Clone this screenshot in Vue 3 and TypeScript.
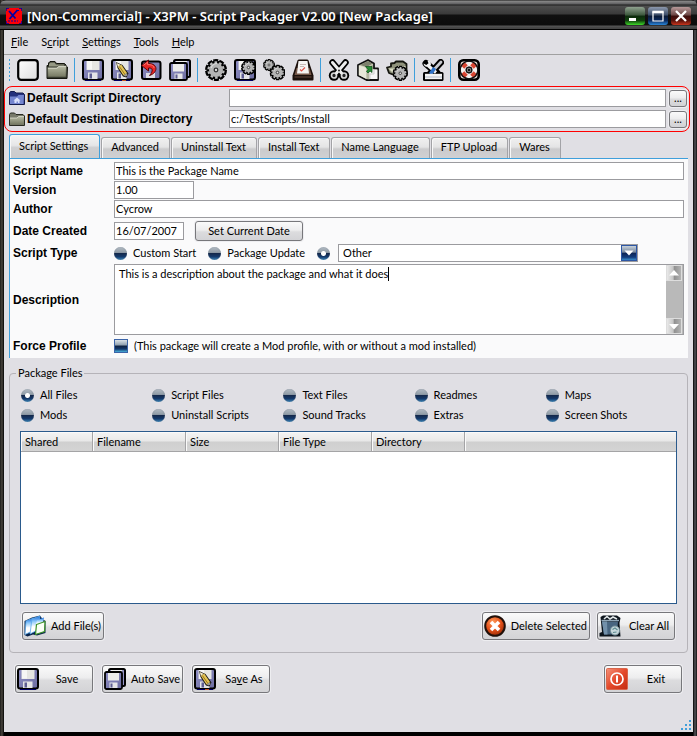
<script setup lang="ts">
import { nextTick, onMounted, ref, watch } from 'vue'

interface MenuEntry { before: string; key: string; after: string }
interface DirectoryRow { id: string; label: string; icon: string }

const menus: MenuEntry[] = [
  { before: '', key: 'F', after: 'ile' },
  { before: 'S', key: 'c', after: 'ript' },
  { before: '', key: 'S', after: 'ettings' },
  { before: '', key: 'T', after: 'ools' },
  { before: '', key: 'H', after: 'elp' },
]

const toolGroups: string[][] = [
  ['new', 'open'],
  ['save', 'save-as', 'revert', 'save-all'],
  ['gear', 'save-gear', 'gears', 'print'],
  ['cut', 'package', 'folder-gear'],
  ['tools'],
  ['help'],
]

const directories: DirectoryRow[] = [
  { id: 'script-dir', label: 'Default Script Directory', icon: 'home-folder' },
  { id: 'dest-dir', label: 'Default Destination Directory', icon: 'folder' },
]
const paths = ref<string[]>(['', 'c:/TestScripts/Install'])

const tabs: string[] = ['Script Settings', 'Advanced', 'Uninstall Text', 'Install Text', 'Name Language', 'FTP Upload', 'Wares']
const activeTab = ref('Script Settings')

const scriptName = ref('This is the Package Name')
const version = ref('1.00')
const author = ref('Cycrow')
const created = ref('16/07/2007')
const scriptType = ref('other')
const otherType = ref('Other')
const description = ref('This is a description about the package and what it does')
const forceProfile = ref(false)

const fileFilters: string[] = [
  'All Files', 'Script Files', 'Text Files', 'Readmes', 'Maps',
  'Mods', 'Uninstall Scripts', 'Sound Tracks', 'Extras', 'Screen Shots',
]
const fileFilter = ref('All Files')
const columns: string[] = ['Shared', 'Filename', 'Size', 'File Type', 'Directory', '']

const descriptionBox = ref<HTMLTextAreaElement | null>(null)
const caretOffset = ref(0)
const caretLine = ref(0)

function setCurrentDate(): void {
  created.value = new Date().toLocaleDateString('en-GB')
}

function scrollDescription(step: number): void {
  descriptionBox.value?.scrollBy({ top: step })
}

// Steady, non-blinking caret placed after the typed text.
function placeCaret(): void {
  const box = descriptionBox.value
  const context = document.createElement('canvas').getContext('2d')
  if (!box || !context) return
  const style = getComputedStyle(box)
  context.font = `${style.fontSize} ${style.fontFamily}`
  const lines = box.value.slice(0, box.selectionEnd).split('\n')
  caretLine.value = lines.length - 1
  caretOffset.value = Math.round(context.measureText(lines[lines.length - 1]).width)
}

onMounted(async () => {
  await nextTick()
  const box = descriptionBox.value
  if (box) {
    box.focus()
    box.setSelectionRange(box.value.length, box.value.length)
  }
  placeCaret()
})

watch(description, placeCaret, { flush: 'post' })
</script>

<template>
  <svg class="sprite" width="0" height="0" aria-hidden="true">
    <defs>
      <linearGradient id="paper" x1="0" y1="0" x2="1" y2="1">
        <stop offset="0" stop-color="#fff" /><stop offset="1" stop-color="#dcdcdc" />
      </linearGradient>
      <linearGradient id="olive" x1="0" y1="0" x2="0" y2="1">
        <stop offset="0" stop-color="#b9bca6" /><stop offset="1" stop-color="#747761" />
      </linearGradient>
      <linearGradient id="disk" x1="0" y1="0" x2="1" y2="1">
        <stop offset="0" stop-color="#8f8fc4" /><stop offset="1" stop-color="#6c6ca0" />
      </linearGradient>
      <radialGradient id="orange" cx=".4" cy=".3" r=".8">
        <stop offset="0" stop-color="#ff9a5a" /><stop offset=".5" stop-color="#e4511a" /><stop offset="1" stop-color="#8a2200" />
      </radialGradient>
      <linearGradient id="power" x1="0" y1="0" x2="1" y2="1">
        <stop offset="0" stop-color="#f4927a" /><stop offset=".5" stop-color="#e4492a" /><stop offset="1" stop-color="#c42c10" />
      </linearGradient>
      <linearGradient id="sheet" x1="0" y1="0" x2="0" y2="1">
        <stop offset="0" stop-color="#1668dc" /><stop offset=".3" stop-color="#8cc8fa" /><stop offset=".6" stop-color="#fff" />
      </linearGradient>
    </defs>

    <symbol id="i-new" viewBox="0 0 22 22">
      <rect x="1.200" y="1.200" width="19.600" height="19.600" rx="3" fill="url(#paper)" stroke="#000" stroke-width="2.200" />
    </symbol>
    <symbol id="i-open" viewBox="0 0 22 22">
      <path d="M1 19V6.500H2.500V4L4 2.500H9L10.500 4.500H18.500L20 6V8H21.500L21 19.500H1Z" fill="#33352b" stroke="#15160f" stroke-width="1" />
      <path d="M3 5 4.500 3.500H8.500L10 5.500H18V7.500H3Z" fill="#969984" />
      <path d="M1.500 8.500H10.500L12.500 6.800H20.500L20 18H1.800Z" fill="url(#olive)" stroke="#45473a" stroke-width=".6" />
      <path d="M2 9.200H11L12.800 7.600H20" fill="none" stroke="#e2e4d6" stroke-width=".8" />
    </symbol>
    <symbol id="i-save" viewBox="0 0 22 22">
      <path d="M3 21.500H19" stroke="#0000c8" stroke-width="1" />
      <rect x="1" y="1" width="20" height="19.600" rx="2" fill="url(#disk)" stroke="#000" stroke-width="2" />
      <rect x="4.500" y="2" width="13" height="9" fill="#e6e6e2" />
      <rect x="5" y="2" width="5" height="8.500" fill="#f7f7f5" />
      <rect x="6" y="13.500" width="9.500" height="6.500" fill="#e4e4e6" />
      <rect x="7.500" y="14.500" width="2.500" height="5" fill="#5d5d92" />
    </symbol>
    <symbol id="i-save-as" viewBox="0 0 22 22">
      <use href="#i-save" width="22" height="22" />
      <path d="M5 3 11.500 6 17.500 14.500 15.500 18.500 12 17.500 6.500 9Z" fill="#1a1712" />
      <path d="M5.700 4 9.500 5.800 7 8.300Z" fill="#f8ecca" />
      <path d="M7 8 10.200 5.600 16 14 12.500 16.500Z" fill="#e4c455" />
      <path d="M8.300 7.500 14 15.500" stroke="#9a7719" stroke-width="1" />
      <path d="M12.600 16.500 16 14 16.500 16.500 14.500 17.500Z" fill="#9c9992" />
      <path d="M11 21.500H15" stroke="#c25724" stroke-width="1" />
    </symbol>
    <symbol id="i-revert" viewBox="0 0 22 22">
      <rect x="2" y="2.500" width="18.500" height="17.500" rx="2" fill="url(#disk)" stroke="#000" stroke-width="2" />
      <rect x="6" y="14" width="9" height="5" fill="#dedee6" />
      <path d="M8.500 1 1.500 6.500 8.500 12V9C13 8.500 13.500 12 9.500 16.500 18 14 18.500 4.500 8.500 4.500Z" fill="#e92626" stroke="#5e0507" stroke-width="1" />
      <path d="M3.500 6.300 7.600 3.200V5.600C12 5.500 14 7 14 9" fill="none" stroke="#ff8a80" stroke-width=".8" />
    </symbol>
    <symbol id="i-save-all" viewBox="0 0 22 22">
      <rect x="5" y="1" width="16" height="17" rx="1.500" fill="#9696c8" stroke="#000" stroke-width="2" />
      <rect x="7" y="2" width="11" height="3" fill="#eee" />
      <rect x="1" y="4" width="17" height="17" rx="1.500" fill="url(#disk)" stroke="#000" stroke-width="1.800" />
      <rect x="4" y="5" width="11" height="7.500" fill="#ececea" />
      <rect x="5.500" y="14.500" width="8" height="5.500" fill="#e4e4e6" />
      <rect x="6.500" y="15.500" width="2" height="4" fill="#5d5d92" />
    </symbol>
    <symbol id="i-gear" viewBox="0 0 22 22">
      <circle cx="11" cy="11" r="9.600" fill="#000" />
      <circle cx="11" cy="11" r="9" fill="none" stroke="#000" stroke-width="4" stroke-dasharray="4.600 1.055" />
      <circle cx="11" cy="11" r="7.600" fill="none" stroke="#bcbcbc" stroke-width="2.200" stroke-dasharray="2.600 2.175" stroke-dashoffset="-.640" />
      <circle cx="11" cy="11" r="7" fill="#b4b4b4" />
      <path d="M6 9Q8 4.500 12 4.500" fill="none" stroke="#dcdcdc" stroke-width="1.200" />
      <circle cx="11" cy="11" r="1.800" fill="#e6e6e6" stroke="#333" stroke-width="1.300" />
    </symbol>
    <symbol id="i-save-gear" viewBox="0 0 22 22">
      <use href="#i-save" width="22" height="22" />
      <use href="#i-gear" x="7" y="1" width="15" height="15" />
    </symbol>
    <symbol id="i-gears" viewBox="0 0 22 22">
      <use href="#i-gear" width="12" height="12" />
      <use href="#i-gear" x="6.500" y="5.500" width="16" height="16" />
    </symbol>
    <symbol id="i-print" viewBox="0 0 22 22">
      <path d="M5.500 1.500Q6 .5 7 .5H15Q16 .5 16.500 1.500L21.500 16.500V20.500Q21.500 21.500 20.500 21.500H1.500Q.5 21.500.5 20.500V16.500Z" fill="#1c110c" />
      <path d="M4.500 9 2.500 16H19.500L17.500 9Z" fill="#77594a" />
      <path d="M6.500 2H15.500L17 14.500H5Z" fill="#f6f4f2" />
      <path d="M8 5.500H14M8 7.500H12" stroke="#c9b9b5" />
      <path d="M8 10.500 9.500 12 13 8.500" fill="none" stroke="#e2554c" stroke-width="1.200" />
      <path d="M2.500 18H19.500" stroke="#4b352b" stroke-width="1.500" />
    </symbol>
    <symbol id="i-cut" viewBox="0 0 22 22">
      <path d="M4.500 3.500 14 15M17.500 3.500 8 15" stroke="#000" stroke-width="6.500" stroke-linecap="round" />
      <circle cx="6" cy="16.500" r="5.200" fill="#000" />
      <circle cx="16" cy="16.500" r="5.200" fill="#000" />
      <circle cx="6" cy="16.500" r="2.500" fill="#222" stroke="#d6d6d6" stroke-width="1.700" />
      <circle cx="16" cy="16.500" r="2.500" fill="#222" stroke="#d6d6d6" stroke-width="1.700" />
      <path d="M4.500 3.500 13.500 14M17.500 3.500 8.500 14" stroke="#eee" stroke-width="3" stroke-linecap="round" />
      <circle cx="11" cy="11.500" r="1" fill="#222" />
    </symbol>
    <symbol id="i-package" viewBox="0 0 22 22">
      <path d="M1 6 11 1 17 4.500V9.500H21V21H9.500L1 16.500Z" fill="#cfd0bb" stroke="#111" stroke-width="1.800" stroke-linejoin="round" />
      <path d="M1.800 6.500 9.500 9V20L1.800 16Z" fill="#e8e8d9" />
      <path d="M3 6 11 2 15.500 4.800 9.500 8Z" fill="#7d806c" />
      <path d="M9.500 8.500 16 5.500V10H12.500V20.500L9.500 20Z" fill="#b4b6a0" />
      <rect x="12.500" y="10.500" width="8" height="9.500" fill="#f6f6f6" />
      <path d="M13 20V15H17V11" fill="none" stroke="#ccc" />
      <path d="M8.500 7.500H15V13.500L13 12 11 14 9.500 12.500 11 10.500Z" fill="#278c34" stroke="#0b4b15" stroke-width=".7" />
    </symbol>
    <symbol id="i-folder-gear" viewBox="0 0 22 22">
      <path d="M1 8.500 5 7.500V4.500L8.500 4 10 2.500H17L20.500 5V16H8L3 14Z" fill="#8f927b" stroke="#15160f" stroke-width="1.800" stroke-linejoin="round" />
      <path d="M2.500 9.500H10L12 7H19.500V14.500H7.500Z" fill="#dcdfc6" />
      <use href="#i-gear" x="6.500" y="6.500" width="15.500" height="15.500" />
    </symbol>
    <symbol id="i-tools" viewBox="0 0 22 22">
      <path d="M4 4.500 15 14M18.500 3.500 8 15" stroke="#000" stroke-width="7" stroke-linecap="round" />
      <rect x="1" y="13" width="20.500" height="9" rx="1.500" fill="#000" />
      <path d="M6 6.500 14 13.500" stroke="#f4f4f4" stroke-width="3" />
      <path d="M1.500 4.500C2 8.500 7.500 9 9 5.500 9 3 7.500 1.500 5.500 1.800L6.500 4.300 4.300 6Z" fill="#f2f2f2" />
      <path d="M19 3 13 9.500" stroke="#c7c9cf" stroke-width="2.800" stroke-linecap="round" />
      <path d="M12.500 9 8.500 15" stroke="#2f72c9" stroke-width="3.600" />
      <rect x="3" y="14.800" width="17" height="5.400" fill="#f4f4f4" />
      <path d="M3 18H20" stroke="#b4bccb" />
    </symbol>
    <symbol id="i-help" viewBox="0 0 22 22">
      <rect x="1.300" y="1.300" width="19.400" height="19.400" rx="4" fill="#dbd9d5" stroke="#000" stroke-width="2.600" />
      <circle cx="11" cy="11" r="9.200" fill="#111" />
      <circle cx="11" cy="11" r="5.800" fill="none" stroke="#f5f1ef" stroke-width="5" />
      <path d="M14 14 17.500 17.500M8 14 4.500 17.500M8 8 4.500 4.500M14 8 17.500 4.500" stroke="#d84632" stroke-width="5" />
      <circle cx="11" cy="11" r="8.800" fill="none" stroke="#111" stroke-width="1.200" />
      <circle cx="11" cy="11" r="2.800" fill="#888" stroke="#111" stroke-width="1.200" />
      <circle cx="11" cy="11" r="1.200" fill="#111" />
    </symbol>
    <symbol id="i-folder" viewBox="0 0 16 14">
      <path d="M.5 13.500V2.500L1.500 1H5.500L7 2.500H14L15.500 4V13.500Z" fill="#77796a" stroke="#292a22" />
      <path d="M1 6H8L9.500 4.500H15L14.500 12.500H1Z" fill="url(#olive)" />
      <path d="M1 6H8L9.500 4.500H15" fill="none" stroke="#dfe0d3" stroke-width=".8" />
    </symbol>
    <symbol id="i-home-folder" viewBox="0 0 16 14">
      <path d="M.5 13.500V2L1.500.5H5.500L7 2H14L15.500 3.500V13.500Z" fill="#24307c" stroke="#141b4d" />
      <path d="M1 5.500H8L9.500 4H15L14.500 13H1Z" fill="#7485cf" />
      <path d="M4.500 9.500 8 6.500 11.500 9.500H10.500V12H9V10.500H7.500V12H5.500V9.500Z" fill="#d9e0fb" />
    </symbol>
    <symbol id="i-files" viewBox="0 0 22 22">
      <path d="M.5 6 8 2.500 16 .5 18.500 4 21.500 6V18L13 20.500 9 19.500 3.500 21.500.5 20Z" fill="#08244b" />
      <path d="M2 6 9.500 3 7.500 16.500 1 19.500Z" fill="url(#sheet)" stroke="#5aa9ec" stroke-width=".8" />
      <path d="M8 3.800 16 1 13.500 15 6 19Z" fill="url(#sheet)" stroke="#5aa9ec" stroke-width=".8" />
      <path d="M13 5 20 2.500 19 8 11.500 12Z" fill="url(#sheet)" />
      <path d="M12.500 9.500 21 6.500 20.500 16.500 11.500 19.500Z" fill="#fafff6" stroke="#3e932c" stroke-width="1.200" />
    </symbol>
    <symbol id="i-delete" viewBox="0 0 22 22">
      <circle cx="11" cy="11" r="9.800" fill="url(#orange)" stroke="#20100a" stroke-width="2" />
      <path d="M7 7 15 15M15 7 7 15" stroke="#fff" stroke-width="3.600" />
    </symbol>
    <symbol id="i-trash" viewBox="0 0 22 22">
      <path d="M1.500 2 4 .5H18L21.500 3 20.500 8 21.500 21.500H.5V18L3 17Z" fill="#0d151d" />
      <path d="M3 6.500H19L18 19.500H5Z" fill="#486580" />
      <path d="M3 6.500H8L8.500 19.500H5Z" fill="#7290aa" />
      <path d="M2.500 5.500H20" stroke="#92a8b9" stroke-width="1.400" />
      <path d="M5 4 8 1.500 11 4 14 2 18 4" fill="none" stroke="#e1e7e9" stroke-width="1.600" />
      <circle cx="16" cy="15.500" r="4.600" fill="#c8d8dc" stroke="#6f8c96" />
      <path d="M13.500 14.500 16 13 18.500 15M14 17.500 17.500 17" fill="none" stroke="#5c8b90" stroke-width="1.200" />
    </symbol>
    <symbol id="i-exit" viewBox="0 0 22 22">
      <rect x=".5" y=".5" width="21" height="21" rx="1" fill="url(#power)" stroke="#d8664c" />
      <circle cx="11" cy="11" r="6" fill="none" stroke="#fff" stroke-width="1.700" />
      <path d="M11 7.500V14.500" stroke="#fff" stroke-width="2" />
    </symbol>
    <symbol id="i-app" viewBox="0 0 16 16">
      <rect width="16" height="16" fill="#fb0008" />
      <path d="M0 3V0H3M13 0H16V3M0 13V16H3M13 16H16V13" fill="none" stroke="#0000a8" stroke-width="1.400" />
      <path d="M3 3 9.500 10.500M11.500 2 3.500 11" stroke="#0000a8" stroke-width="1.800" />
      <path d="M11 2.500H13.500M2 13H12" stroke="#0000a8" stroke-width="1.200" stroke-dasharray="2 1" />
    </symbol>
  </svg>

  <div class="window">
    <header class="titlebar">
      <svg class="app-icon" aria-hidden="true"><use href="#i-app" /></svg>
      <h1>[Non-Commercial] - X3PM - Script Packager V2.00 [New Package]</h1>
      <div class="window-buttons">
        <button type="button" class="minimize" aria-label="Minimize">
          <svg viewBox="0 0 20 18"><path d="M4 12.500H11" stroke="#fff" stroke-width="3" /></svg>
        </button>
        <button type="button" class="maximize" aria-label="Maximize">
          <svg viewBox="0 0 20 18"><path d="M5 5H15V14H5Z" fill="none" stroke="#fff" stroke-width="1.200" /><path d="M4.400 5H15.600" stroke="#fff" stroke-width="2.600" /></svg>
        </button>
        <button type="button" class="close" aria-label="Close">
          <svg viewBox="0 0 20 18"><path d="M5 4 15 14M15 4 5 14" stroke="#fff" stroke-width="2.300" /></svg>
        </button>
      </div>
    </header>

    <div class="client">
      <nav class="menubar">
        <button v-for="menu in menus" :key="menu.before + menu.key" type="button">{{ menu.before }}<u>{{ menu.key }}</u>{{ menu.after }}</button>
      </nav>

      <div class="toolbar" role="toolbar">
        <span class="grip"></span>
        <div v-for="(group, index) in toolGroups" :key="index" class="tool-group">
          <button v-for="tool in group" :key="tool" type="button" :aria-label="tool">
            <svg class="icon"><use :href="'#i-' + tool" /></svg>
          </button>
        </div>
      </div>

      <section class="directories">
        <div v-for="(dir, index) in directories" :key="dir.id" class="directory">
          <svg aria-hidden="true"><use :href="'#i-' + dir.icon" /></svg>
          <label :for="dir.id">{{ dir.label }}</label>
          <input :id="dir.id" v-model="paths[index]" type="text">
          <button type="button" class="push browse">...</button>
        </div>
      </section>

      <div class="tabs" role="tablist">
        <button
          v-for="tab in tabs" :key="tab" type="button" role="tab"
          :class="{ active: tab === activeTab }" :aria-selected="tab === activeTab" @click="activeTab = tab"
        >{{ tab }}</button>
      </div>

      <form class="settings" @submit.prevent>
        <div class="field">
          <label for="script-name">Script Name</label>
          <input id="script-name" v-model="scriptName" class="wide" type="text">
        </div>
        <div class="field">
          <label for="version">Version</label>
          <input id="version" v-model="version" class="short" type="text">
        </div>
        <div class="field">
          <label for="author">Author</label>
          <input id="author" v-model="author" class="wide" type="text">
        </div>
        <div class="field date">
          <label for="created">Date Created</label>
          <input id="created" v-model="created" type="text">
          <button type="button" class="push set-date" @click="setCurrentDate">Set Current Date</button>
        </div>
        <div class="field types">
          <span class="caption">Script Type</span>
          <label class="option"><input v-model="scriptType" type="radio" name="type" value="start">Custom Start</label>
          <label class="option"><input v-model="scriptType" type="radio" name="type" value="update">Package Update</label>
          <input v-model="scriptType" type="radio" name="type" value="other" aria-label="Other type">
          <div class="dropdown">
            <select v-model="otherType" aria-label="Script type"><option>Other</option></select>
            <span class="arrow"><svg viewBox="0 0 14 14"><path d="M2.500 4.500H11.500L7 9.500Z" fill="#fff" /></svg></span>
          </div>
        </div>
        <div class="field description">
          <label for="description">Description</label>
          <div class="memo">
            <textarea id="description" ref="descriptionBox" v-model="description" spellcheck="false" @click="placeCaret" @keyup="placeCaret"></textarea>
            <span class="caret" :style="{ marginLeft: caretOffset + 'px', marginTop: caretLine * 14 + 'px' }"></span>
            <div class="scroller">
              <button type="button" aria-label="Scroll up" @click="scrollDescription(-14)"><svg viewBox="0 0 14 14"><path d="M2 9.500 7 4 12 9.500Z" fill="#fff" /></svg></button>
              <button type="button" aria-label="Scroll down" @click="scrollDescription(14)"><svg viewBox="0 0 14 14"><path d="M2 5 7 10.500 12 5Z" fill="#fff" /></svg></button>
            </div>
          </div>
        </div>
        <div class="field force">
          <label for="force">Force Profile</label>
          <input id="force" v-model="forceProfile" type="checkbox">
          <span>(This package will create a Mod profile, with or without a mod installed)</span>
        </div>
      </form>

      <fieldset class="files">
        <legend>Package Files</legend>
        <div class="filters">
          <label v-for="filter in fileFilters" :key="filter" class="option">
            <input v-model="fileFilter" type="radio" name="filter" :value="filter">{{ filter }}
          </label>
        </div>
        <div class="list">
          <table>
            <thead>
              <tr><th v-for="column in columns" :key="column" scope="col">{{ column }}</th></tr>
            </thead>
            <tbody></tbody>
          </table>
        </div>
        <div class="actions">
          <button type="button" class="push large"><svg class="icon"><use href="#i-files" /></svg><span>Add File(s)</span></button>
          <button type="button" class="push large delete"><svg class="icon"><use href="#i-delete" /></svg><span>Delete Selected</span></button>
          <button type="button" class="push large"><svg class="icon"><use href="#i-trash" /></svg><span>Clear All</span></button>
        </div>
      </fieldset>

      <footer class="bottom">
        <button type="button" class="push large"><svg class="icon"><use href="#i-save" /></svg><span>Save</span></button>
        <button type="button" class="push large"><svg class="icon"><use href="#i-save-all" /></svg><span>Auto Save</span></button>
        <button type="button" class="push large"><svg class="icon"><use href="#i-save-as" /></svg><span>Sa<u>v</u>e As</span></button>
        <button type="button" class="push large exit"><svg class="icon"><use href="#i-exit" /></svg><span>Exit</span></button>
      </footer>

      <svg class="resize" viewBox="0 0 10 10" aria-hidden="true">
        <path d="M8 0h2v2h-2zM4 4h2v2h-2zM8 4h2v2h-2zM0 8h2v2h-2zM4 8h2v2h-2zM8 8h2v2h-2z" fill="#3f9fdb" />
      </svg>
    </div>
  </div>
</template>

<style>
body {
  margin: 0;
  background: #000;
}
</style>

<style scoped>
* {
  box-sizing: border-box;
}

.sprite {
  position: absolute;
}

.window {
  display: flex;
  flex-direction: column;
  min-height: 100vh;
  padding: 0 4px 4px;
  background: linear-gradient(90deg, #1b1a18 0, #4a463f 2px, #000 4px, #000 calc(100% - 4px), #55555a calc(100% - 2px), #111 100%);
  font: 11px/14px Lato, "Liberation Sans", sans-serif;
  color: #000;
}

button,
input,
select,
textarea {
  margin: 0;
  font: inherit;
  color: inherit;
}

.titlebar {
  display: flex;
  align-items: center;
  height: 30px;
  margin: 0 -4px;
  padding: 3px 6px 0;
  border-radius: 6px 6px 0 0;
  border-bottom: 1px solid #000;
  background: linear-gradient(#111 0, #8a8a8a 1px, #5e5e60 4px, #1c1c1c 5px, #4e4e4e 6px, #3a3a3a 14px, #101010 15px, #0c0c0c 25px, #555 26px, #444 28px);
}

.app-icon {
  width: 16px;
  height: 16px;
}

h1 {
  flex: 1;
  margin: 0 0 0 5px;
  font: 600 13px/18px "Noto Sans", "Open Sans", sans-serif;
  color: #fff;
  white-space: nowrap;
}

.window-buttons {
  display: flex;
  gap: 3px;
}

.window-buttons button {
  width: 20px;
  height: 18px;
  padding: 0;
  border: 0;
  border-radius: 3px;
}

.window-buttons svg {
  display: block;
}

.minimize {
  background: linear-gradient(#8fa18f, #3c573c 45%, #0c2a0c 50%, #0f400c 75%, #3ddb28);
}

.maximize {
  background: linear-gradient(#8c98ac, #3a4c68 45%, #0a1a35 50%, #0b2b60 75%, #2a86d8);
}

.close {
  background: linear-gradient(#b79a9a, #6c4644 45%, #3a0e0c 50%, #5a120c 75%, #c8341c);
}

.client {
  position: relative;
  display: flex;
  flex: 1;
  flex-direction: column;
  background: #e0dfe4;
}

.menubar {
  display: flex;
  gap: 13px;
  height: 25px;
  margin-right: 1px;
  padding: 5px 7px 0;
  border-bottom: 1px solid #a0a0a0;
}

.menubar button {
  height: 14px;
  padding: 0;
  border: 0;
  background: none;
}

.toolbar {
  display: flex;
  align-items: center;
  height: 29px;
  padding-left: 3px;
}

.grip {
  width: 5px;
  height: 22px;
  margin-right: 5px;
  background: conic-gradient(from 90deg at 2px 2px, transparent 75%, #3f9fdb 0) 0 0 / 3px 4px;
}

.tool-group {
  display: flex;
  align-items: center;
  gap: 7px;
  height: 24px;
  padding-right: 6px;
}

.tool-group + .tool-group {
  padding-left: 7px;
  border-left: 1px solid #3f9fdb;
}

.tool-group button {
  padding: 0;
  border: 0;
  background: none;
}

.icon {
  display: block;
  flex: none;
  width: 22px;
  height: 22px;
}

.directories {
  display: flex;
  flex-direction: column;
  gap: 3px;
  margin: 2px 3px 0 0;
  padding: 2px 2px 3px 4px;
  border: 1px solid #f00;
  border-radius: 8px;
}

.directory {
  display: grid;
  grid-template-columns: 16px 204px 1fr 18px;
  align-items: center;
}

.directory svg {
  width: 16px;
  height: 14px;
}

label,
.caption {
  white-space: nowrap;
}

.directory label,
.field > label:first-child,
.caption {
  font: bold 12px/14px "Liberation Sans", sans-serif;
}

.directory label {
  padding-left: 2px;
}

input[type="text"] {
  min-width: 0;
  height: 18px;
  padding: 0 1px 1px;
  border: 1px solid #9b9b9f;
  outline: 0;
  background: #fff;
}

.directory input {
  margin-right: 3px;
}

.push {
  padding: 0;
  border: 1px solid #77777b;
  border-radius: 3px;
  background: linear-gradient(#fafafa, #ededee 45%, #dcdcde 55%, #d3d3d6);
  box-shadow: 0 0 0 1px #eeeef1;
  white-space: nowrap;
}

.browse {
  height: 17px;
  line-height: 12px;
}

.tabs {
  display: flex;
  align-items: flex-end;
  gap: 1px;
  height: 26px;
  padding: 0 5px;
}

.tabs button {
  height: 21px;
  padding: 0 9px 2px;
  border: 1px solid #a3a3a7;
  border-bottom: 0;
  border-radius: 3px 3px 0 0;
  background: linear-gradient(#f0f0f0, #e4e4e5 45%, #cbcbcd 55%, #d0d0d2);
  box-shadow: inset 1px 1px 0 #f8f8f8;
  white-space: nowrap;
}

.tabs button + button {
  padding: 0 10px 2px 9px;
}

.tabs button.active {
  height: 24px;
  padding: 0 11px 2px 9px;
  border-color: #3f9fdb;
  background: linear-gradient(#f4f4f4, #e6e6e7 45%, #cfcfd1 55%, #cbcbcd);
}

.settings {
  display: flex;
  flex-direction: column;
  gap: 1px;
  margin: 0 5px;
  padding: 3px 4px 3px 3px;
  border-top: 1px solid #3f9fdb;
  border-left: 1px solid #3f9fdb;
  background: #fafafb;
}

.field {
  display: flex;
  align-items: center;
}

.field > label:first-child,
.caption {
  flex: none;
  width: 101px;
}

.wide {
  flex: 1;
}

.short {
  width: 80px;
}

.date {
  height: 24px;
}

.date input {
  width: 70px;
}

.set-date {
  width: 108px;
  height: 20px;
  margin-left: 11px;
}

.types {
  height: 18px;
}

.option {
  display: flex;
  align-items: center;
  gap: 6px;
}

.types .option {
  margin-right: 12px;
}

input[type="radio"] {
  flex: none;
  width: 13px;
  height: 13px;
  border-radius: 50%;
  appearance: none;
  background: linear-gradient(#b4bcc4, #8f9ba6 42%, #14294c 50%, #143a6c 75%, #3c88bc);
  box-shadow: inset 0 0 1px #6d7a88;
}

input[type="radio"]:checked {
  background: radial-gradient(circle, #fff 2px, transparent 3px), linear-gradient(#b4bcc4, #8f9ba6 42%, #14294c 50%, #143a6c 75%, #3c88bc);
}

.dropdown {
  position: relative;
  width: 300px;
  margin-left: 8px;
}

select {
  display: block;
  width: 100%;
  height: 18px;
  padding: 0 20px 0 4px;
  border: 1px solid #9b9b9f;
  border-radius: 0;
  appearance: none;
  background: #fff;
}

.arrow {
  position: absolute;
  top: 1px;
  right: 1px;
  width: 16px;
  height: 16px;
  border: 1px solid #2d57a4;
  background: linear-gradient(#c6d0da, #74869c 45%, #0d2454 50%, #123c7c 80%, #3a8cc8);
  pointer-events: none;
}

.arrow svg,
.scroller svg {
  display: block;
}

.description {
  margin-top: 1px;
}

.memo {
  position: relative;
  display: flex;
  flex: 1;
  height: 71px;
  border: 1px solid #9b9b9f;
  background: #fff;
}

textarea {
  flex: 1;
  padding: 2px 4px;
  border: 0;
  outline: 0;
  resize: none;
  overflow: hidden;
  background: none;
  caret-color: transparent;
}

.caret {
  position: absolute;
  top: 2px;
  left: 4px;
  width: 1px;
  height: 14px;
  background: #000;
  pointer-events: none;
}

.scroller {
  display: flex;
  flex-direction: column;
  justify-content: space-between;
  width: 17px;
  background: #b9b9b9;
}

.scroller button {
  width: 16px;
  height: 16px;
  padding: 0;
  border: 1px solid #ddd;
  background: linear-gradient(90deg, #e8e8e8, #c4c4c4 45%, #8f8f8f 50%, #b4b4b4);
}

.force {
  height: 19px;
}

input[type="checkbox"] {
  width: 14px;
  height: 14px;
  margin-right: 6px;
  border: 1px solid #3b64a8;
  appearance: none;
  background: linear-gradient(#dbe2e8, #8fa0b0 42%, #0d2040 50%, #13386c 75%, #49b0dc);
}

input[type="checkbox"]:checked {
  background: #fff;
}

.files {
  min-width: 0;
  margin: 8px 5px 0;
  padding: 6px 10px 12px;
  border: 1px solid #b5b3b8;
  border-radius: 4px;
}

legend {
  padding: 0 2px;
  margin-left: -4px;
}

.filters {
  display: grid;
  grid-template-columns: repeat(5, 1fr);
  row-gap: 6px;
  padding: 2px 0 9px 1px;
}

.list {
  height: 173px;
  border: 1px solid #2a5a8c;
  background: #fff;
}

table {
  width: 100%;
  border-spacing: 0;
  table-layout: fixed;
}

th {
  width: 93px;
  height: 20px;
  padding: 1px 4px 0;
  border-right: 1px solid #a4a4a6;
  border-bottom: 1px solid #a4a4a6;
  background: linear-gradient(#f4f4f4, #e8e8e8 48%, #cfcfcf 52%, #d4d4d4);
  box-shadow: inset 1px 1px 0 #fafafa;
  font-weight: normal;
  text-align: left;
}

th:first-child {
  width: 72px;
}

th:last-child {
  width: auto;
  border-right: 0;
}

.actions {
  display: flex;
  gap: 7px;
  padding: 8px 2px 0;
}

.delete {
  margin-left: auto;
}

.large {
  display: flex;
  align-items: center;
  min-width: 78px;
  height: 28px;
  padding: 0 2px 0 1px;
}

.large span {
  flex: 1;
  padding-left: 5px;
  text-align: center;
}

.bottom {
  display: flex;
  gap: 9px;
  padding: 12px 11px;
}

.exit {
  margin-left: auto;
}

.resize {
  position: absolute;
  right: 2px;
  bottom: 2px;
  width: 10px;
  height: 10px;
}
</style>
